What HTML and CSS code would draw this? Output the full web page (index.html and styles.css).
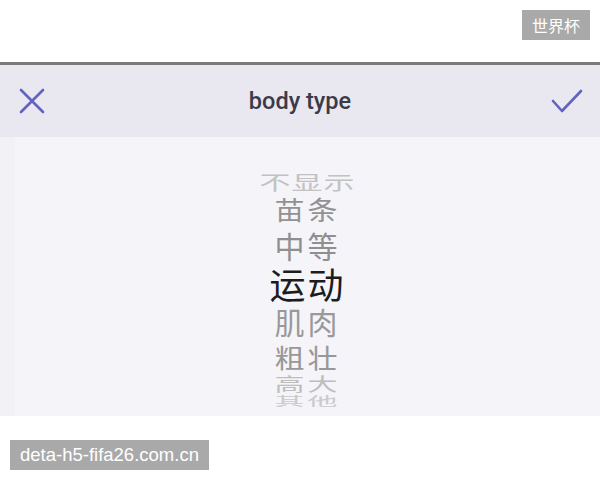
FILE: index.html
```html
<!DOCTYPE html>
<html lang="zh">
<head>
<meta charset="utf-8">
<link rel="stylesheet" href="styles.css">
</head>
<body>
<div class="page">
  <div class="top">
    <span class="tag">世界杯</span>
  </div>
  <div class="rule"></div>
  <div class="header">
    <svg class="icon" width="26" height="26" viewBox="0 0 26 26"><path d="M2 2 L24 24 M24 2 L2 24" stroke="#6262c0" stroke-width="2.6" fill="none" stroke-linecap="round"/></svg>
    <div class="title">body type</div>
    <svg class="icon" width="32" height="26" viewBox="0 0 32 26"><path d="M2 13 L11 23 L30 3" stroke="#6262c0" stroke-width="2.6" fill="none" stroke-linecap="round" stroke-linejoin="round"/></svg>
  </div>
  <div class="picker">
    <div class="wheel">
      <div class="item i0"><span>不显示</span></div>
      <div class="item i1"><span>苗条</span></div>
      <div class="item i2"><span>中等</span></div>
      <div class="item sel"><span>运动</span></div>
      <div class="item i4"><span>肌肉</span></div>
      <div class="item i5"><span>粗壮</span></div>
      <div class="item i6"><span>高大</span></div>
      <div class="item i7"><span>其他</span></div>
    </div>
  </div>
  <div class="bottom">
    <span class="url">deta-h5-fifa26.com.cn</span>
  </div>
</div>
</body>
</html>
```
FILE: styles.css
```css
html, body {
  margin: 0;
  padding: 0;
  background: #ffffff;
}
.page {
  width: 600px;
  height: 480px;
  overflow: hidden;
  font-family: "Noto Sans CJK SC", "Noto Sans", sans-serif;
}
.top {
  height: 62px;
  box-sizing: border-box;
  padding: 10px 10px 0 0;
  display: flex;
  justify-content: flex-end;
  align-items: flex-start;
  background: #ffffff;
}
.tag {
  background: #a9a9a9;
  color: #ffffff;
  font-size: 16px;
  height: 30px;
  line-height: 30px;
  padding: 0 10px;
}
.rule {
  height: 3px;
  background: #7b7b7b;
}
.header {
  height: 72px;
  background: #e9e8f0;
  display: flex;
  align-items: center;
  justify-content: space-between;
  padding: 0 17px 0 19px;
  box-sizing: border-box;
}
.icon {
  display: block;
}
.title {
  font-family: Roboto, "Noto Sans", sans-serif;
  font-weight: 500;
  font-size: 23.5px;
  color: #3a3a4a;
  padding-left: 4px;
}
.picker {
  height: 279px;
  background: #f5f4f9;
  border-left: 15px solid #f2f1f5;
  box-sizing: border-box;
  padding-top: 28px;
  padding-right: 3px;
}
.wheel {
  height: 243px;
  box-sizing: border-box;
  padding-top: 6px;
  overflow: hidden;
  display: flex;
  flex-direction: column;
  align-items: center;
}
.item {
  display: flex;
  align-items: center;
  justify-content: center;
  flex-shrink: 0;
  font-size: 30px;
  color: #8e8e8e;
  line-height: 1;
}
.item span {
  display: block;
  letter-spacing: 3px;
  margin-right: -3px;
}
.i0 { height: 20px; color: #c2c2c2; font-size: 31px; }
.i0 span { transform: scaleY(0.62); letter-spacing: 1px; }
.i1 { height: 35px; color: #929292; }
.i1 span { transform: scaleY(0.86); }
.i2 { height: 38px; color: #8f8f8f; }
.sel { height: 38px; color: #1c1c1c; font-size: 36px; }
.sel span { letter-spacing: 2px; }
.i4 { height: 38px; color: #999999; }
.i5 { height: 34px; color: #989898; }
.i5 span { transform: scaleY(0.88); }
.i6 { height: 18px; color: #bdbdbd; }
.i6 span { transform: scaleY(0.62); }
.i7 { height: 18px; color: #cacaca; }
.i7 span { transform: scaleY(0.4); }
.bottom {
  height: 64px;
  background: #ffffff;
  padding: 24px 0 0 10px;
  box-sizing: border-box;
}
.url {
  display: inline-block;
  background: #a9a9a9;
  color: #ffffff;
  font-family: "Liberation Sans", sans-serif;
  font-size: 18.5px;
  height: 30px;
  line-height: 30px;
  padding: 0 10px;
}
```
